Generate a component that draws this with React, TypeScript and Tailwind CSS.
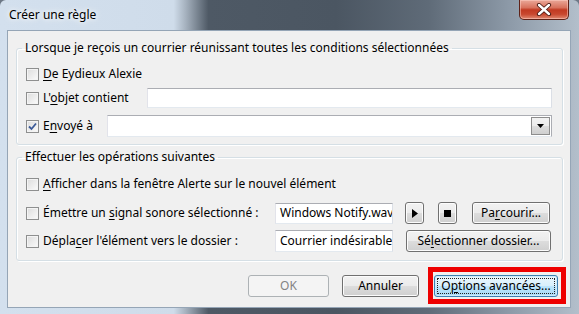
import type { ReactNode } from 'react';

// Win7 "Créer une règle" dialog (Outlook rules)

function CheckBox({ checked = false }: { checked?: boolean }) {
    return (
        <span className="shrink-0 w-[13px] h-[13px] border border-[#8e8f8f] bg-[linear-gradient(135deg,#dcdcdc,#fbfbfb)] shadow-[inset_0_0_0_1px_#f4f4f4] flex items-center justify-center">
            {checked && (
                <svg width="11" height="11" viewBox="0 0 11 11">
                    <path d="M2 5.5 L4.5 8 L9 2.5" fill="none" stroke="#3b5a98" strokeWidth={1.8} />
                </svg>
            )}
        </span>
    );
}

function Key({ children }: { children: ReactNode }) {
    return <u className="underline underline-offset-[2px] decoration-1">{children}</u>;
}

function TextBox({ children, className = '' }: { children?: ReactNode; className?: string }) {
    return (
        <div
            className={`h-[20px] bg-white border border-[#abadb3] border-l-[#e2e3ea] border-r-[#dbdfe6] border-b-[#e3e9ef] px-[4px] flex items-center overflow-hidden whitespace-nowrap ${className}`}
        >
            {children}
        </div>
    );
}

function Button({ children, className = '', disabled = false }: { children: ReactNode; className?: string; disabled?: boolean }) {
    return (
        <div
            className={`h-[22px] rounded-[3px] border flex items-center justify-center whitespace-nowrap ${
                disabled
                    ? 'border-[#adb2b5] bg-[#f4f4f4] text-[#838383]'
                    : 'border-[#707070] bg-[linear-gradient(#f2f2f2,#ebebeb_50%,#dddddd_50%,#cfcfcf)] shadow-[inset_0_0_0_1px_#fcfcfc] text-black'
            } ${className}`}
        >
            {children}
        </div>
    );
}

export default function App() {
    return (
        <div className="w-[579px] h-[314px] overflow-hidden bg-[#6d7886] font-['Segoe_UI','Noto_Sans',sans-serif] text-[12px] leading-[16px] text-black">
            <div className="w-full h-full rounded-t-[6px] flex flex-col bg-[linear-gradient(to_right,#d3e0ee_0%,#cfdcea_30%,#a7b3c0_32%,#4e5965_36%,#4b5662_58%,#5f6b78_74%,#8d9aa8_88%,#b3bfcb_100%)]">
                {/* Title bar */}
                <div className="relative h-[30px] shrink-0 pl-[9px] pt-[7px]">
                    <span className="[text-shadow:0_0_8px_#ffffff,0_0_4px_#ffffff]">Créer une règle</span>
                    <div className="absolute right-[10px] top-0 w-[50px] h-[20px] rounded-b-[5px] border border-t-0 border-[#5e2218] bg-[linear-gradient(#eaa899,#d8725d_40%,#c13a22_52%,#c8482f_75%,#e08a72)] shadow-[inset_0_0_0_1px_rgba(255,210,200,0.5)] flex items-center justify-center">
                        <svg width="16" height="13" viewBox="0 0 16 13">
                            <path d="M3 2 L13 11 M13 2 L3 11" stroke="#4a1a12" strokeWidth={4.2} strokeLinecap="round" />
                            <path d="M3 2 L13 11 M13 2 L3 11" stroke="#ffffff" strokeWidth={2.4} strokeLinecap="round" />
                        </svg>
                    </div>
                </div>

                {/* Client area */}
                <div className="ml-[7px] mr-[8px] h-[278px] shrink-0 bg-[#f0f0f0] border border-[#95a5b6] flex flex-col">
                    <fieldset className="mt-[9px] ml-[8px] mr-[7px] border border-[#d5dfe5] rounded-[3px] shadow-[inset_1px_1px_0_#ffffff,1px_1px_0_#ffffff]">
                        <legend className="ml-[5px] px-[3px]">Lorsque je reçois un courrier réunissant toutes les conditions sélectionnées</legend>
                        <div className="pt-[8px] pb-[7px] pl-[9px] pr-[10px] flex flex-col">
                            <div className="h-[20px] flex items-center gap-[4px]">
                                <CheckBox />
                                <span>
                                    <Key>D</Key>e Eydieux Alexie
                                </span>
                            </div>
                            <div className="mt-[4px] h-[20px] flex items-center">
                                <CheckBox />
                                <span className="ml-[4px] w-[104px]">
                                    L'<Key>o</Key>bjet contient
                                </span>
                                <TextBox className="flex-1" />
                            </div>
                            <div className="mt-[7px] h-[22px] flex items-center">
                                <CheckBox checked />
                                <span className="ml-[4px] w-[64px]">
                                    E<Key>n</Key>voyé à
                                </span>
                                <div className="flex-1 h-[22px] bg-white border border-[#abadb3] border-l-[#e2e3ea] border-b-[#e3e9ef] flex items-center justify-end pr-[1px]">
                                    <div className="w-[19px] h-[18px] border border-[#8d8d8d] bg-[linear-gradient(#f2f2f2,#ebebeb_50%,#dddddd_50%,#cfcfcf)] flex items-center justify-center">
                                        <svg width="7" height="4" viewBox="0 0 7 4">
                                            <path d="M0 0 H7 L3.5 4 Z" fill="#000000" />
                                        </svg>
                                    </div>
                                </div>
                            </div>
                        </div>
                    </fieldset>

                    <fieldset className="mt-[4px] ml-[8px] mr-[7px] border border-[#d5dfe5] rounded-[3px] shadow-[inset_1px_1px_0_#ffffff,1px_1px_0_#ffffff]">
                        <legend className="ml-[5px] px-[3px]">Effectuer les opérations suivantes</legend>
                        <div className="pt-[9px] pb-[8px] pl-[9px] pr-[10px] flex flex-col">
                            <div className="h-[20px] flex items-center gap-[4px]">
                                <CheckBox />
                                <span>
                                    <Key>A</Key>fficher dans la fenêtre Alerte sur le nouvel élément
                                </span>
                            </div>
                            <div className="mt-[8px] h-[22px] flex items-center">
                                <div className="w-[249px] flex items-center gap-[4px]">
                                    <CheckBox />
                                    <span>
                                        Émettre un <Key>s</Key>ignal sonore sélectionné :
                                    </span>
                                </div>
                                <TextBox className="w-[118px] !h-[21px]">Windows Notify.wav</TextBox>
                                <Button className="ml-[12px] w-[19px]">
                                    <svg width="6" height="9" viewBox="0 0 6 9">
                                        <path d="M0 0 L6 4.5 L0 9 Z" fill="#000000" />
                                    </svg>
                                </Button>
                                <Button className="ml-[14px] w-[19px]">
                                    <svg width="7" height="7" viewBox="0 0 7 7">
                                        <rect width="7" height="7" fill="#000000" />
                                    </svg>
                                </Button>
                                <Button className="ml-[15px] w-[78px]">
                                    Pa<Key>r</Key>courir...
                                </Button>
                            </div>
                            <div className="mt-[6px] h-[22px] flex items-center">
                                <div className="w-[249px] flex items-center gap-[4px]">
                                    <CheckBox />
                                    <span>
                                        Dépla<Key>c</Key>er l'élément vers le dossier :
                                    </span>
                                </div>
                                <TextBox className="w-[118px] !h-[22px]">Courrier indésirable</TextBox>
                                <Button className="ml-[13px] w-[145px]">
                                    Sé<Key>l</Key>ectionner dossier...
                                </Button>
                            </div>
                        </div>
                    </fieldset>

                    {/* Bottom buttons */}
                    <div className="mt-[6px] pr-[4px] flex items-center justify-end">
                        <Button disabled className="w-[81px]">
                            OK
                        </Button>
                        <Button className="ml-[13px] w-[77px]">Annuler</Button>
                        <div className="ml-[9px] w-[138px] h-[37px] border-[5px] border-[#ee0000] flex items-center pl-[1px]">
                            <div className="w-[124px] h-[22px] rounded-[3px] border border-[#3c7fb1] bg-[linear-gradient(#eaf6fd,#d9f0fc_50%,#bee6fd_50%,#a7d9f5)] shadow-[inset_0_0_0_1px_#cdebfc] p-[2px]">
                                <div className="h-full border border-dotted border-[#222222] flex items-center justify-center whitespace-nowrap">
                                    O<Key>p</Key>tions avancées...
                                </div>
                            </div>
                        </div>
                    </div>
                </div>
            </div>
        </div>
    );
}
